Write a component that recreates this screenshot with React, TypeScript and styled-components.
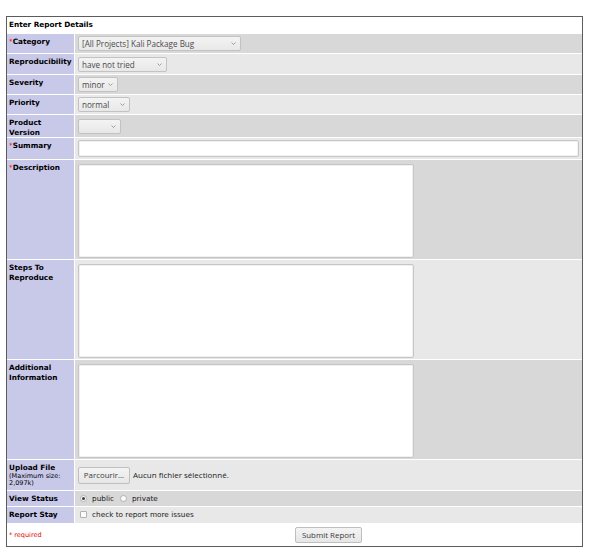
import React from "react";
import styled, { createGlobalStyle } from "styled-components";

const Global = createGlobalStyle`
  html, body { margin: 0; padding: 0; background: #ffffff; }
  body { font-family: "DejaVu Sans", Verdana, sans-serif; color: #000; }
  * { box-sizing: border-box; }
`;

const Page = styled.div`
  padding: 16px 6px 0;
`;

const Form = styled.form`
  border: 1px solid #5c5c5c;
  background: #ffffff;
  display: flex;
  flex-direction: column;
  gap: 1px;
  margin: 0;
`;

const TitleRow = styled.div`
  height: 16px;
  display: flex;
  align-items: center;
  padding: 0 2px;
  font-weight: bold;
  font-size: 7.3px;
  line-height: 9.7px;
`;

const Row = styled.div<{ $h: number }>`
  display: grid;
  grid-template-columns: 67px 1fr;
  column-gap: 1px;
  height: ${(p) => p.$h}px;
`;

const Label = styled.div<{ $plain?: boolean }>`
  background: ${(p) => (p.$plain ? "#ffffff" : "#c8c8e8")};
  font-weight: ${(p) => (p.$plain ? "normal" : "bold")};
  font-size: 7.3px;
  line-height: 9.7px;
  padding: 3px 2px 0;
  display: flex;
  flex-direction: column;
  justify-content: ${(p) => (p.$plain ? "center" : "flex-start")};
  padding-top: ${(p) => (p.$plain ? "0" : "3px")};
`;

const Req = styled.span`
  color: #ff0000;
  font-weight: normal;
`;

const Note = styled.span`
  font-weight: normal;
  font-size: 6.5px;
  line-height: 7px;
`;

const RequiredNote = styled.span`
  color: #e00000;
  font-size: 6.5px;
  line-height: 8px;
`;

const tones: Record<number, string> = { 0: "#ffffff", 1: "#d8d8d8", 2: "#e8e8e8" };

const Field = styled.div<{ $tone: 0 | 1 | 2; $top?: boolean; $center?: boolean }>`
  background: ${(p) => tones[p.$tone]};
  padding: ${(p) => (p.$top ? "4px 3px 0" : "0 3px")};
  display: flex;
  align-items: ${(p) => (p.$top ? "flex-start" : "center")};
  justify-content: ${(p) => (p.$center ? "center" : "flex-start")};
  font-size: 7.3px;
  line-height: 9.7px;
`;

const SelectWrap = styled.span<{ $w: number }>`
  position: relative;
  display: inline-block;
  width: ${(p) => p.$w}px;
  height: 15px;
`;

const NativeSelect = styled.select`
  appearance: none;
  -webkit-appearance: none;
  width: 100%;
  height: 100%;
  margin: 0;
  padding: 0 0 0 3px;
  border: 1px solid #c2c2c2;
  border-radius: 2px;
  background: linear-gradient(#f3f3f3, #e8e8e8);
  font-family: "Open Sans", sans-serif;
  font-size: 8.1px;
  color: #4a4a4a;
  outline: none;
`;

const Chevron = styled.svg`
  position: absolute;
  right: 5px;
  top: 6px;
  width: 5px;
  height: 3px;
  pointer-events: none;
`;

const TextInput = styled.input`
  width: 100%;
  height: 17px;
  margin: 0;
  border: 1px solid #c6c6c6;
  border-radius: 2px;
  background: #ffffff;
  box-shadow: inset 0 0 0 1px #f2f2f2;
  outline: none;
`;

const TextArea = styled.textarea`
  width: 336px;
  height: 94px;
  margin: 0;
  border: 1px solid #c6c6c6;
  border-radius: 2px;
  background: #ffffff;
  box-shadow: inset 0 0 0 1px #f0f0f0;
  resize: none;
  outline: none;
`;

const Btn = styled.button<{ $w: number; $h: number }>`
  width: ${(p) => p.$w}px;
  height: ${(p) => p.$h}px;
  margin: 0;
  padding: 0;
  border: 1px solid #bfbfbf;
  border-radius: 2px;
  background: linear-gradient(#f4f4f4, #e6e6e6);
  font-family: "Open Sans", sans-serif;
  font-size: 7.9px;
  color: #3c3c3c;
`;

const FileName = styled.span`
  font-family: "Open Sans", sans-serif;
  font-size: 8px;
  color: #222;
  margin-left: 3px;
`;

const Options = styled.div`
  display: flex;
  align-items: center;
`;

const Radio = styled.input`
  appearance: none;
  -webkit-appearance: none;
  width: 7px;
  height: 7px;
  margin: 0 5px 0 2px;
  border: 1px solid #b0b0b0;
  border-radius: 50%;
  background: #fbfbfb;
  display: grid;
  place-content: center;
  &:checked::before {
    content: "";
    width: 3px;
    height: 3px;
    border-radius: 50%;
    background: #3a3a3a;
  }
`;

const Check = styled.input`
  appearance: none;
  -webkit-appearance: none;
  width: 7px;
  height: 7px;
  margin: 0 5px 0 2px;
  border: 1px solid #b0b0b0;
  border-radius: 1px;
  background: #fbfbfb;
`;

const OptText = styled.span<{ $gap?: number }>`
  color: #222;
  margin-right: ${(p) => p.$gap ?? 0}px;
`;

function Select({ w, value }: { w: number; value: string }) {
  return (
    <SelectWrap $w={w}>
      <NativeSelect defaultValue={value}>
        <option value={value}>{value}</option>
      </NativeSelect>
      <Chevron viewBox="0 0 5 3">
        <path d="M0.5 0.5 L2.5 2.5 L4.5 0.5" fill="none" stroke="#8a8a8a" strokeWidth="0.8" />
      </Chevron>
    </SelectWrap>
  );
}

export default function App() {
  return (
    <Page>
      <Global />
      <Form onSubmit={(e) => e.preventDefault()}>
        <TitleRow>Enter Report Details</TitleRow>
        <Row $h={19}>
          <Label>
            <span>
              <Req>*</Req>Category
            </span>
          </Label>
          <Field $tone={1}>
            <Select w={163} value="[All Projects] Kali Package Bug" />
          </Field>
        </Row>
        <Row $h={20}>
          <Label>Reproducibility</Label>
          <Field $tone={2}>
            <Select w={89} value="have not tried" />
          </Field>
        </Row>
        <Row $h={19}>
          <Label>Severity</Label>
          <Field $tone={1}>
            <Select w={40} value="minor" />
          </Field>
        </Row>
        <Row $h={19}>
          <Label>Priority</Label>
          <Field $tone={2}>
            <Select w={52} value="normal" />
          </Field>
        </Row>
        <Row $h={22}>
          <Label>Product Version</Label>
          <Field $tone={1}>
            <Select w={43} value="" />
          </Field>
        </Row>
        <Row $h={21}>
          <Label>
            <span>
              <Req>*</Req>Summary
            </span>
          </Label>
          <Field $tone={2}>
            <TextInput type="text" />
          </Field>
        </Row>
        <Row $h={99}>
          <Label>
            <span>
              <Req>*</Req>Description
            </span>
          </Label>
          <Field $tone={1} $top>
            <TextArea />
          </Field>
        </Row>
        <Row $h={99}>
          <Label>Steps To Reproduce</Label>
          <Field $tone={2} $top>
            <TextArea />
          </Field>
        </Row>
        <Row $h={99}>
          <Label>Additional Information</Label>
          <Field $tone={1} $top>
            <TextArea />
          </Field>
        </Row>
        <Row $h={30}>
          <Label>
            <span>Upload File</span>
            <Note>(Maximum size: 2,097k)</Note>
          </Label>
          <Field $tone={2}>
            <Btn type="button" $w={52} $h={17}>
              Parcourir...
            </Btn>
            <FileName>Aucun fichier sélectionné.</FileName>
          </Field>
        </Row>
        <Row $h={15}>
          <Label>View Status</Label>
          <Field $tone={1}>
            <Options>
              <Radio type="radio" name="view" defaultChecked />
              <OptText $gap={4}>public</OptText>
              <Radio type="radio" name="view" />
              <OptText>private</OptText>
            </Options>
          </Field>
        </Row>
        <Row $h={16}>
          <Label>Report Stay</Label>
          <Field $tone={2}>
            <Options>
              <Check type="checkbox" />
              <OptText>check to report more issues</OptText>
            </Options>
          </Field>
        </Row>
        <Row $h={22}>
          <Label $plain>
            <RequiredNote>* required</RequiredNote>
          </Label>
          <Field $tone={0} $center>
            <Btn type="submit" $w={67} $h={16}>
              Submit Report
            </Btn>
          </Field>
        </Row>
      </Form>
    </Page>
  );
}
